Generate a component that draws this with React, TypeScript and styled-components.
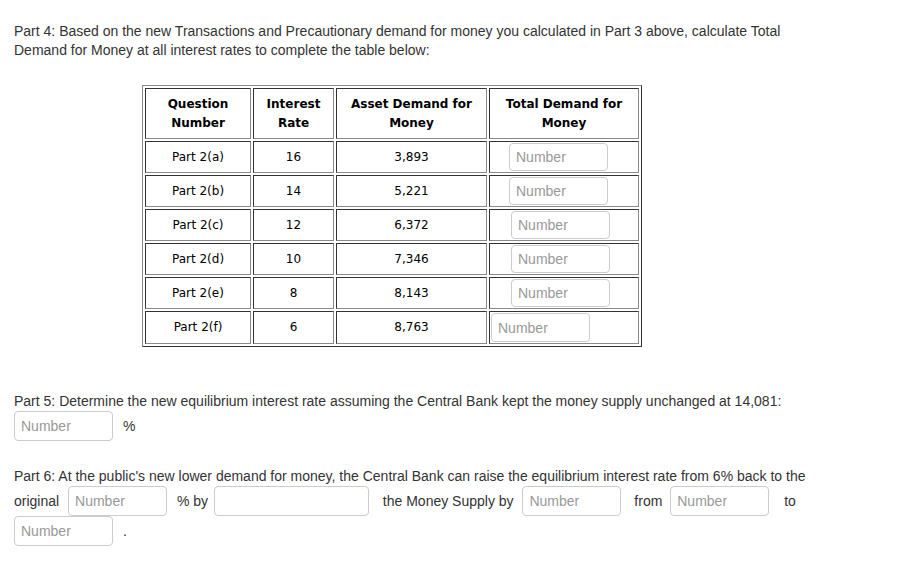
import React from "react";
import styled, { createGlobalStyle } from "styled-components";

const GlobalStyle = createGlobalStyle`
  body {
    margin: 0;
    background: #fff;
    font-family: "Liberation Sans", Arial, sans-serif;
    font-size: 14px;
    color: #333;
  }
`;

const Page = styled.div`
  width: 810px;
  padding: 22px 0 30px 14px;
  line-height: 19px;
`;

const Paragraph = styled.p<{ $top?: number }>`
  margin: ${(p) => p.$top ?? 0}px 0 0;
`;

const Table = styled.table`
  margin: 25px 0 0 128px;
  width: 500px;
  table-layout: fixed;
  border-collapse: separate;
  border-spacing: 2px;
  border: 1px solid;
  border-color: #8a8a8a #333 #333 #8a8a8a;
  font-family: "DejaVu Sans", Verdana, sans-serif;
  font-size: 12px;
  color: #000;
`;

const HeadCell = styled.th`
  padding: 6px 4px 5px;
  border: 1px solid;
  border-color: #333 #8a8a8a #8a8a8a #333;
  font-weight: bold;
  text-align: center;
  vertical-align: middle;
`;

const Cell = styled.td<{ $left?: boolean }>`
  padding: 1px ${(p) => (p.$left ? 1 : 4)}px;
  border: 1px solid;
  border-color: #333 #8a8a8a #8a8a8a #333;
  text-align: ${(p) => (p.$left ? "left" : "center")};
  vertical-align: middle;
  line-height: 19px;
`;

const Input = styled.input<{ $w?: number; $ml?: number; $mr?: number; $h?: number }>`
  box-sizing: border-box;
  width: ${(p) => p.$w ?? 99}px;
  height: ${(p) => p.$h ?? 30}px;
  margin: 0 ${(p) => p.$mr ?? 0}px 0 ${(p) => p.$ml ?? 0}px;
  padding: 0 6px;
  border: 1px solid #ccc;
  border-radius: 4px;
  background: #fff;
  font-family: "Liberation Sans", Arial, sans-serif;
  font-size: 14px;
  color: #333;
  vertical-align: baseline;

  &::placeholder {
    color: #999;
  }
`;

const CellInput = styled(Input)`
  vertical-align: middle;
`;

const rows = [
  { q: "Part 2(a)", rate: 16, asset: "3,893", offset: 18 },
  { q: "Part 2(b)", rate: 14, asset: "5,221", offset: 18 },
  { q: "Part 2(c)", rate: 12, asset: "6,372", offset: 20 },
  { q: "Part 2(d)", rate: 10, asset: "7,346", offset: 20 },
  { q: "Part 2(e)", rate: 8, asset: "8,143", offset: 20 },
  { q: "Part 2(f)", rate: 6, asset: "8,763", offset: 0 },
];

export default function App() {
  return (
    <Page>
      <GlobalStyle />
      <Paragraph>
        Part 4: Based on the new Transactions and Precautionary demand for money you
        calculated in Part 3 above, calculate Total Demand for Money at all interest rates
        to complete the table below:
      </Paragraph>

      <Table>
        <colgroup>
          <col style={{ width: 106 }} />
          <col style={{ width: 81 }} />
          <col style={{ width: 151 }} />
          <col style={{ width: 150 }} />
        </colgroup>
        <thead>
          <tr>
            <HeadCell>
              Question
              <br />
              Number
            </HeadCell>
            <HeadCell>
              Interest
              <br />
              Rate
            </HeadCell>
            <HeadCell>
              Asset Demand for
              <br />
              Money
            </HeadCell>
            <HeadCell>
              Total Demand for
              <br />
              Money
            </HeadCell>
          </tr>
        </thead>
        <tbody>
          {rows.map((r) => (
            <tr key={r.q}>
              <Cell>{r.q}</Cell>
              <Cell>{r.rate}</Cell>
              <Cell>{r.asset}</Cell>
              <Cell $left>
                <CellInput
                  placeholder="Number"
                  $ml={r.offset}
                  $h={r.offset === 0 ? 29 : 28}
                />
              </Cell>
            </tr>
          ))}
        </tbody>
      </Table>

      <Paragraph $top={45}>
        Part 5: Determine the new equilibrium interest rate assuming the Central Bank kept
        the money supply unchanged at 14,081: <Input placeholder="Number" $mr={6} /> %
      </Paragraph>

      <Paragraph $top={26}>
        Part 6: At the public's new lower demand for money, the Central Bank can raise the
        equilibrium interest rate from 6% back to the original{" "}
        <Input placeholder="Number" $ml={5} $mr={6} /> % by{" "}
        <Input $w={155} $ml={2} $mr={10} /> the Money Supply by{" "}
        <Input placeholder="Number" $ml={5} $mr={9} /> from{" "}
        <Input placeholder="Number" $ml={4} $mr={11} /> to{" "}
        <Input placeholder="Number" $mr={6} /> .
      </Paragraph>
    </Page>
  );
}
